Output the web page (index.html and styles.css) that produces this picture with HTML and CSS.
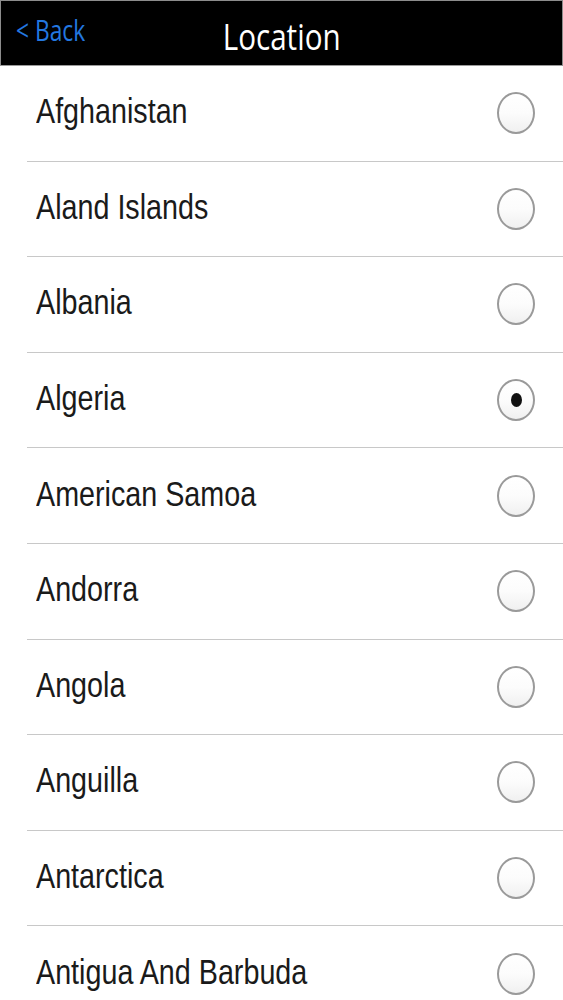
FILE: index.html
```html
<!DOCTYPE html>
<html>
<head>
<meta charset="utf-8">
<link rel="stylesheet" href="styles.css">
</head>
<body>
<div class="screen">
  <header class="nav">
    <a class="back"><span class="squeeze">&lt; Back</span></a>
    <h1 class="title"><span class="squeeze">Location</span></h1>
  </header>
  <ul class="list">
    <li class="row"><span class="name">Afghanistan</span><span class="radio"></span></li>
    <li class="row"><span class="name">Aland Islands</span><span class="radio"></span></li>
    <li class="row"><span class="name">Albania</span><span class="radio"></span></li>
    <li class="row"><span class="name">Algeria</span><span class="radio checked"></span></li>
    <li class="row"><span class="name">American Samoa</span><span class="radio"></span></li>
    <li class="row"><span class="name">Andorra</span><span class="radio"></span></li>
    <li class="row"><span class="name">Angola</span><span class="radio"></span></li>
    <li class="row"><span class="name">Anguilla</span><span class="radio"></span></li>
    <li class="row"><span class="name">Antarctica</span><span class="radio"></span></li>
    <li class="row"><span class="name">Antigua And Barbuda</span><span class="radio"></span></li>
  </ul>
</div>
</body>
</html>
```
FILE: styles.css
```css
html, body {
  margin: 0;
  padding: 0;
  background: #fff;
}
.screen {
  width: 563px;
  height: 1000px;
  overflow: hidden;
}
.nav {
  position: relative;
  height: 64px;
  background: #000;
  border: 1px solid #8c8c8c;
  border-bottom: 1px solid #9a9a9a;
  display: flex;
  align-items: center;
  justify-content: center;
  box-sizing: content-box;
}
.back {
  position: absolute;
  left: 15px;
  top: 9px;
  font-family: "Open Sans", sans-serif;
  font-size: 30px;
  color: #2378e0;
  line-height: 40px;
}
.title {
  margin: 0;
  font-family: "Open Sans", sans-serif;
  font-weight: 400;
  font-size: 37px;
  color: #fff;
  line-height: 60px;
  margin-top: 6px;
}
.squeeze {
  display: inline-block;
  transform: scaleX(0.8);
}
.back .squeeze {
  transform: scaleX(0.76);
  transform-origin: left center;
}
.list {
  list-style: none;
  margin: 0;
  padding: 0;
}
.row {
  height: 94.6px;
  margin-left: 27px;
  border-bottom: 1px solid #c8c8c8;
  display: flex;
  align-items: center;
  justify-content: space-between;
  padding-right: 28px;
}
.name {
  display: inline-block;
  font-family: "Liberation Sans", Arial, sans-serif;
  font-size: 35px;
  color: #1a1a1a;
  margin-left: 9px;
  margin-bottom: 4px;
  transform: scaleX(0.82);
  transform-origin: left center;
  white-space: nowrap;
}
.radio {
  position: relative;
  width: 34px;
  height: 38px;
  border: 2px solid #9a9a9a;
  border-radius: 50%;
  background: linear-gradient(#ffffff 0%, #fcfcfc 50%, #f0f0f0 100%);
  flex: none;
}
.radio.checked::after {
  content: "";
  position: absolute;
  left: 12px;
  top: 12px;
  width: 11px;
  height: 14px;
  border-radius: 50%;
  background: #111;
}
```
